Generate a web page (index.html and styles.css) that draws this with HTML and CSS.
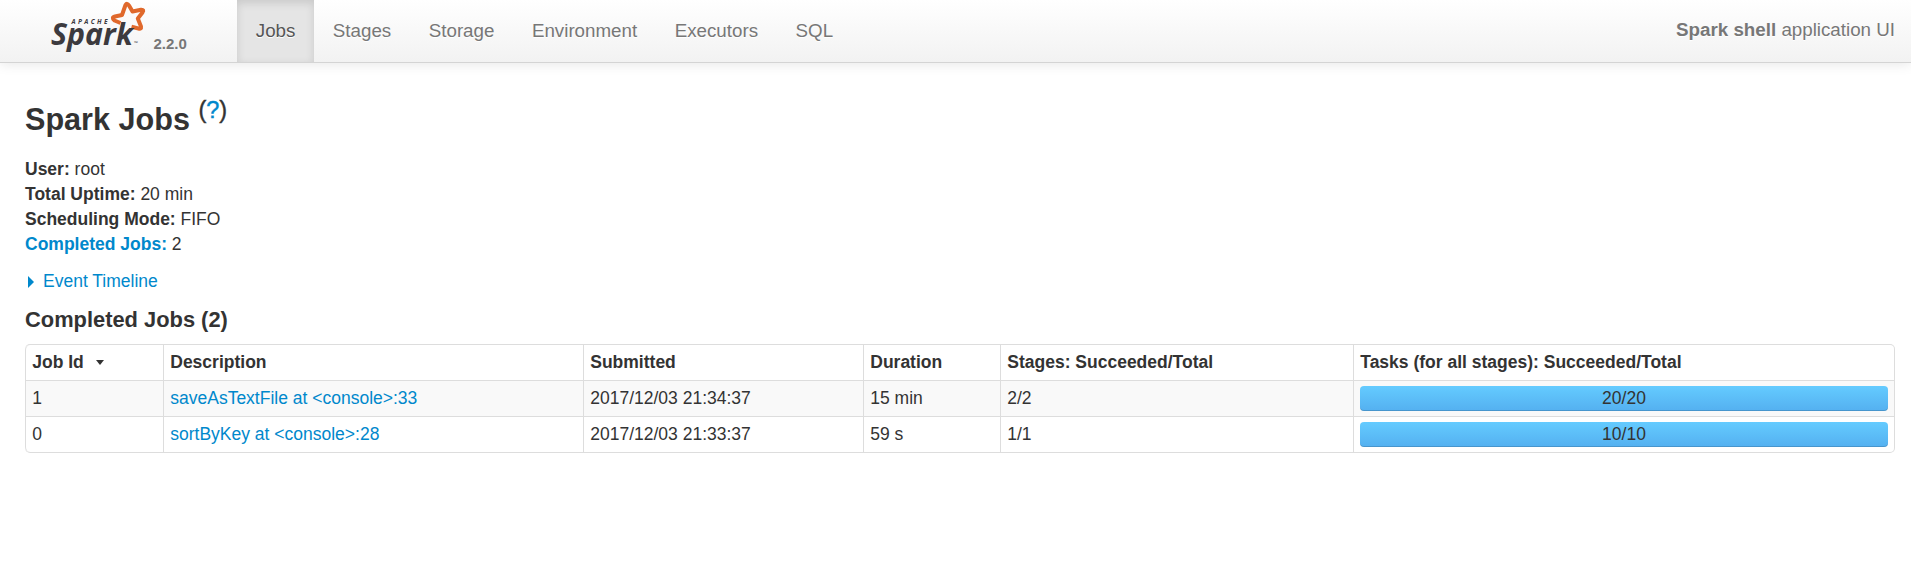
FILE: index.html
```html
<!DOCTYPE html>
<html lang="en">
<head>
<meta charset="utf-8">
<title>Spark shell - Spark Jobs</title>
<link rel="stylesheet" href="styles.css">
</head>
<body>
<header class="navbar">
  <a class="brand" href="#">
    <svg class="logo" width="98" height="62" viewBox="0 0 98 62" aria-label="Apache Spark">
      <path class="logo-star" d="M70.500 23 L64.500 20.500 Q61 17.500 65 16.500 L72 15 L75.500 5 Q77 2.500 79 5.500 L82.500 11.500 L91 9.700 Q94.500 9.500 92.500 12.500 L87.800 18.500 L91 26.500 Q91.500 29.500 88.500 28.500 L81.500 26.800"/>
      <text class="logo-apache" x="21.500" y="24" textLength="36">APACHE</text>
      <text class="logo-spark" x="1" y="45" textLength="82" lengthAdjust="spacingAndGlyphs">Spark</text>
      <text class="logo-tm" x="84" y="45">™</text>
    </svg>
    <span class="version">2.2.0</span>
  </a>
  <nav class="nav">
    <a class="nav-link active" href="#">Jobs</a>
    <a class="nav-link" href="#">Stages</a>
    <a class="nav-link" href="#">Storage</a>
    <a class="nav-link" href="#">Environment</a>
    <a class="nav-link" href="#">Executors</a>
    <a class="nav-link" href="#">SQL</a>
  </nav>
  <p class="app-name"><strong>Spark shell</strong> application UI</p>
</header>
<main class="content">
  <h3 class="title">Spark Jobs <sup class="help">(<a href="#">?</a>)</sup></h3>
  <ul class="summary">
    <li><strong>User:</strong> root</li>
    <li><strong>Total Uptime:</strong> 20 min</li>
    <li><strong>Scheduling Mode:</strong> FIFO</li>
    <li><a href="#"><strong>Completed Jobs:</strong></a> 2</li>
  </ul>
  <a class="timeline" href="#"><span class="arrow"></span>Event Timeline</a>
  <h4 class="subtitle">Completed Jobs (2)</h4>
  <table class="jobs">
    <colgroup><col class="c-id"><col class="c-desc"><col class="c-sub"><col class="c-dur"><col class="c-stages"><col></colgroup>
    <thead>
      <tr><th>Job Id <span class="sort"></span></th><th>Description</th><th>Submitted</th><th>Duration</th><th>Stages: Succeeded/Total</th><th>Tasks (for all stages): Succeeded/Total</th></tr>
    </thead>
    <tbody>
      <tr><td>1</td><td><a href="#">saveAsTextFile at &lt;console&gt;:33</a></td><td>2017/12/03 21:34:37</td><td>15 min</td><td>2/2</td><td><div class="bar">20/20</div></td></tr>
      <tr><td>0</td><td><a href="#">sortByKey at &lt;console&gt;:28</a></td><td>2017/12/03 21:33:37</td><td>59 s</td><td>1/1</td><td><div class="bar">10/10</div></td></tr>
    </tbody>
  </table>
</main>
</body>
</html>
```
FILE: styles.css
```css
* { box-sizing: border-box; }
body {
  margin: 0;
  background: #fff;
  color: #333;
  font: 17.5px/25px "Liberation Sans", Arial, sans-serif;
}
a { color: #08c; text-decoration: none; }

.navbar {
  display: flex;
  height: 63px;
  padding-right: 16px;
  background: linear-gradient(#fff, #f2f2f2);
  border-bottom: 1px solid #d4d4d4;
  box-shadow: 0 1px 12px rgba(0, 0, 0, .1);
  color: #777;
}
.brand { display: flex; width: 237px; padding-left: 50px; color: #777; }
.logo { display: block; overflow: visible; }
.logo-spark { font: italic 700 31px "Open Sans", sans-serif; fill: #3c3a3e; }
.logo-apache { font: italic 700 6.500px "Open Sans", sans-serif; fill: #3c3a3e; }
.logo-tm { font: 5px "Open Sans", sans-serif; fill: #3c3a3e; }
.logo-star { fill: none; stroke: #e0692c; stroke-width: 4; stroke-linejoin: round; }
.version { margin: 31px 0 0 5.500px; font-size: 15px; font-weight: 700; }
.nav { display: flex; font-size: 18.750px; }
.nav-link { padding: 18px 18.750px 0; color: #777; text-shadow: 0 1px 0 #fff; }
.nav-link.active {
  color: #555;
  background: #e5e5e5;
  box-shadow: inset 0 3px 8px rgba(0, 0, 0, .125);
}
.app-name { margin: 17px 0 0 auto; font-size: 18.750px; text-shadow: 0 1px 0 #fff; }

.content { padding: 31px 16px 0 25px; }
.title { margin: 0; font-size: 30.600px; line-height: 50px; }
.help {
  position: relative;
  top: -.5em;
  font-size: 23.500px;
  font-weight: 400;
  line-height: 0;
  vertical-align: baseline;
  -webkit-text-stroke: .4px;
}
.summary { margin: 13px 0 0; padding: 0; list-style: none; }
.timeline { display: flex; align-items: center; margin-top: 12px; }
.arrow {
  margin: 0 9px 0 3px;
  border: 6px solid transparent;
  border-left: 6px solid #08c;
  border-right: 0;
}
.subtitle { margin: 13px 0 12px; font-size: 21.875px; line-height: 25px; }

.jobs {
  width: 100%;
  table-layout: fixed;
  border: 1px solid #ddd;
  border-left: 0;
  border-radius: 5px;
  border-spacing: 0;
}
.c-id { width: 138px; }
.c-desc { width: 420px; }
.c-sub { width: 280px; }
.c-dur { width: 137px; }
.c-stages { width: 353px; }
.jobs th, .jobs td {
  height: 35px;
  padding: 5px 6.250px;
  border-left: 1px solid #ddd;
  text-align: left;
}
.jobs td { height: 36px; border-top: 1px solid #ddd; }
.jobs th:first-child { border-top-left-radius: 5px; }
.jobs tr:last-child td:first-child { border-bottom-left-radius: 5px; }
.jobs tbody tr:nth-child(odd) td { background: #f9f9f9; }
.sort {
  display: inline-block;
  margin-left: 7px;
  border: 4px solid transparent;
  border-top: 5px solid #333;
  border-bottom: 0;
  vertical-align: 3px;
}
.bar {
  height: 25px;
  border-radius: 4px;
  background: linear-gradient(#64cbff, #54b0f0);
  box-shadow: inset 0 -1px 0 rgba(0, 0, 0, .15);
  text-align: center;
}
```
